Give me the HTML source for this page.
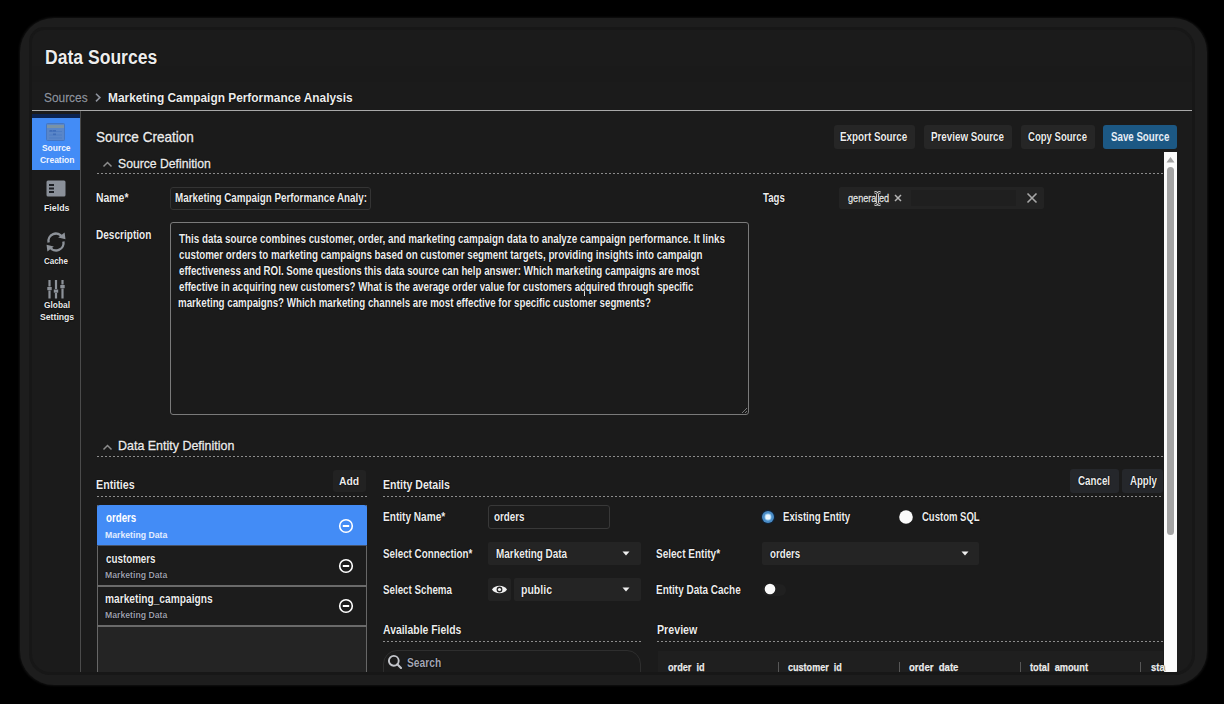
<!DOCTYPE html>
<html><head><meta charset="utf-8">
<style>
html,body{margin:0;padding:0;}
body{width:1224px;height:704px;background:#000;position:relative;overflow:hidden;font-family:"Liberation Sans",sans-serif;}
.abs{position:absolute;}
.frame{position:absolute;left:20px;top:17.5px;width:1186.5px;height:667px;border-radius:34px;background:#1d1d1d;box-shadow:0 0 2px 0.5px #101010;}
.inner{position:absolute;left:32px;top:30px;width:1160px;height:642px;border-radius:12px 18px 17px 18px;background:#1b1b1b;box-shadow:0 0 0 3px #171717;}
.clip{position:absolute;left:0;top:0;width:1224px;height:704px;clip-path:inset(30px 32px 32px 32px round 12px 18px 17px 18px);}
.t{position:absolute;white-space:pre;line-height:1;font-weight:700;transform-origin:0 0;text-shadow:0 0 1.2px #000,0 0 1.2px #000;}
.dash{position:absolute;height:1px;background:repeating-linear-gradient(90deg,#8c8c8c 0 2.5px,transparent 2.5px 4px);}
.btn{position:absolute;background:#262626;border-radius:3px;}
.box{position:absolute;box-sizing:border-box;}
</style></head><body>
<div class="frame"></div>
<div class="inner"></div>
<div class="clip">
<div class="abs" style="left:32px;top:66px;width:1160px;height:16px;background:#1a1a1a"></div>
<!-- header line -->
<div class="abs" style="left:32px;top:110px;width:1160px;height:1px;background:#a9a9a9"></div>
<!-- breadcrumb chevron -->
<svg class="abs" style="left:93px;top:92px" width="10" height="12" viewBox="0 0 10 12"><path d="M3 1.8 L6.9 5.6 L3 9.4" fill="none" stroke="#8d929c" stroke-width="1.6"/></svg>
<!-- sidebar -->
<div class="abs" style="left:80px;top:111px;width:1px;height:570px;background:#4b4b4b"></div>
<div class="abs" style="left:32px;top:114px;width:48px;height:4px;background:#0b2350"></div>
<div class="abs" style="left:32px;top:118px;width:48px;height:52px;background:#438cf6"></div>
<svg class="abs" style="left:46px;top:122.5px" width="19" height="18" viewBox="0 0 19 18"><rect x="0.5" y="0.5" width="18" height="17" rx="1" fill="#5a86c8" stroke="#4576c2" stroke-width="1"/><rect x="1" y="2" width="17" height="3" fill="#7a93a6"/><path d="M3 8.5H16M3 12H16M3 15H16" stroke="#4d7cc4" stroke-width="1"/><rect x="3.5" y="7" width="3" height="1.6" fill="#3f6db8"/><rect x="7" y="7" width="3" height="1.6" fill="#3f6db8"/><rect x="7" y="10.5" width="3" height="1.6" fill="#3f6db8"/></svg>
<svg class="abs" style="left:46px;top:180px" width="20" height="17" viewBox="0 0 20 17"><rect x="0.5" y="0.5" width="19" height="16" rx="1.5" fill="#8a9099"/><path d="M3 5H8M3 8.5H8M3 12H8" stroke="#1c1f24" stroke-width="2"/></svg>
<svg class="abs" style="left:45px;top:231px" width="22" height="22" viewBox="0 0 22 22"><path d="M3.6 11.5 A7.4 7.4 0 0 1 17.2 6.2" fill="none" stroke="#8d9299" stroke-width="2.4"/><path d="M18.4 10.5 A7.4 7.4 0 0 1 4.8 15.8" fill="none" stroke="#8d9299" stroke-width="2.4"/><path d="M13.2 6.6 L20.5 8.2 L19.6 1.6Z" fill="#8d9299"/><path d="M8.8 15.4 L1.5 13.8 L2.4 20.4Z" fill="#8d9299"/></svg>
<svg class="abs" style="left:46px;top:280px" width="20" height="19" viewBox="0 0 20 19"><path d="M3.5 0V6.5M3.5 10.5V18.5M10 0V9M10 13V18.5M16.5 0V4.5M16.5 8.5V18.5" stroke="#8d9299" stroke-width="2.2"/><rect x="1.3" y="7" width="4.4" height="3.2" fill="#8d9299"/><rect x="7.8" y="9.5" width="4.4" height="3.2" fill="#8d9299"/><rect x="14.3" y="5" width="4.4" height="3.2" fill="#8d9299"/></svg>
<!-- top buttons -->
<div class="btn" style="left:834px;top:124.5px;width:81px;height:24px;"></div>
<div class="btn" style="left:923.5px;top:124.5px;width:88px;height:24px;"></div>
<div class="btn" style="left:1020.5px;top:124.5px;width:74.5px;height:24px;"></div>
<div class="btn" style="left:1103px;top:124.5px;width:74px;height:24px;background:#1c5884"></div>
<!-- scrollbar -->
<div class="abs" style="left:1164px;top:152px;width:13px;height:530px;background:#fbfbfb"></div>
<svg class="abs" style="left:1164px;top:155px" width="13" height="9" viewBox="0 0 13 9"><path d="M2.5 7.5 L6.5 2 L10.5 7.5Z" fill="#a3a3a3"/></svg>
<div class="abs" style="left:1167px;top:167px;width:7px;height:368px;border-radius:3.5px;background:#a3a3a3"></div>
<!-- section headers -->
<svg class="abs" style="left:102px;top:160px" width="11" height="8" viewBox="0 0 11 8"><path d="M1.5 6.5 L5.5 2.5 L9.5 6.5" fill="none" stroke="#8d8d8d" stroke-width="1.5"/></svg>
<div class="dash" style="left:97px;top:172.5px;width:1066px"></div>
<!-- name input -->
<div class="box" style="left:169.5px;top:186.5px;width:201.5px;height:23px;border:1px solid #343434;border-radius:3px;background:#1c1c1c"></div>
<!-- tags -->
<div class="box" style="left:838.5px;top:187px;width:205px;height:22px;border-radius:2px;background:#232323"></div>
<div class="box" style="left:910.5px;top:190px;width:105.5px;height:16px;background:#1f1f1f"></div>
<svg class="abs" style="left:893px;top:193px" width="10" height="10" viewBox="0 0 10 10"><path d="M2 2L8 8M8 2L2 8" stroke="#b4b4b4" stroke-width="1.5"/></svg>
<svg class="abs" style="left:1026px;top:192px" width="12" height="12" viewBox="0 0 12 12"><path d="M1.5 1.5L10.5 10.5M10.5 1.5L1.5 10.5" stroke="#a8a8a8" stroke-width="1.6"/></svg>

<!-- description textarea -->
<div class="box" style="left:169.5px;top:222px;width:579.5px;height:193px;border:1px solid #7a7a7a;border-radius:3px;"></div>
<svg class="abs" style="left:740px;top:406px" width="8" height="8" viewBox="0 0 8 8"><path d="M7 2L2 7M7 5L5 7" stroke="#777" stroke-width="1"/></svg>
<div class="abs" style="left:584px;top:282px;width:1px;height:14px;background:#dcdcdc"></div>
<!-- data entity definition -->
<svg class="abs" style="left:102px;top:443px" width="11" height="8" viewBox="0 0 11 8"><path d="M1.5 6.5 L5.5 2.5 L9.5 6.5" fill="none" stroke="#8d8d8d" stroke-width="1.5"/></svg>
<div class="dash" style="left:97px;top:456px;width:1066px"></div>
<div class="btn" style="left:333px;top:470px;width:32.5px;height:22px;background:#222"></div>
<div class="dash" style="left:97px;top:496px;width:270px"></div>
<div class="dash" style="left:383px;top:496px;width:780px"></div>
<div class="btn" style="left:1069.5px;top:469px;width:49px;height:23.5px;background:#25272b"></div>
<div class="btn" style="left:1122px;top:469px;width:41px;height:23.5px;background:#25272b"></div>
<!-- entity list -->
<div class="box" style="left:97px;top:504.5px;width:270px;height:200px;border:1.5px solid #676767;border-top:none;background:#242424"></div>
<div class="box" style="left:97px;top:545px;width:270px;height:81px;background:#1c1c1c;border-left:1.5px solid #676767;border-right:1.5px solid #676767"></div>
<div class="abs" style="left:97px;top:585.3px;width:270px;height:1.5px;background:#6a6a6a"></div>
<div class="abs" style="left:97px;top:625.3px;width:270px;height:1.5px;background:#6a6a6a"></div>
<div class="abs" style="left:97px;top:545px;width:270px;height:1px;background:#46536b"></div>
<div class="box" style="left:97px;top:504.5px;width:270px;height:40.5px;background:#438cf6;border-radius:3px 3px 0 0;"></div>
<svg class="abs" style="left:337px;top:516.5px" width="18" height="18" viewBox="0 0 18 18"><circle cx="9" cy="9" r="6.3" fill="none" stroke="#fff" stroke-width="1.6"/><path d="M5.8 9H12.2" stroke="#fff" stroke-width="2"/></svg>
<svg class="abs" style="left:337px;top:556.5px" width="18" height="18" viewBox="0 0 18 18"><circle cx="9" cy="9" r="6.3" fill="none" stroke="#fff" stroke-width="1.6"/><path d="M5.8 9H12.2" stroke="#fff" stroke-width="2"/></svg>
<svg class="abs" style="left:337px;top:596.5px" width="18" height="18" viewBox="0 0 18 18"><circle cx="9" cy="9" r="6.3" fill="none" stroke="#fff" stroke-width="1.6"/><path d="M5.8 9H12.2" stroke="#fff" stroke-width="2"/></svg>
<!-- form -->
<div class="box" style="left:488px;top:505px;width:122px;height:24px;border:1px solid #383838;border-radius:3px;background:#1c1c1c"></div>
<div class="box" style="left:488px;top:542px;width:152.5px;height:23px;border-radius:2px;background:#242424"></div>
<svg class="abs" style="left:620px;top:549px" width="12" height="9" viewBox="0 0 12 9"><path d="M2.5 2.5H9.5L6 6.5Z" fill="#f0f0f0"/></svg>
<div class="box" style="left:488px;top:578px;width:23px;height:23px;border-radius:2px;background:#232323"></div>
<svg class="abs" style="left:491px;top:583px" width="17" height="13" viewBox="0 0 17 13"><path d="M1 6.5 C4 1.5 13 1.5 16 6.5 C13 11.5 4 11.5 1 6.5Z" fill="#f2f2f2"/><circle cx="8.5" cy="6.5" r="2.9" fill="#232323"/><circle cx="8.5" cy="6.5" r="1.6" fill="#f2f2f2"/></svg>
<div class="box" style="left:514px;top:578px;width:126.5px;height:23px;border-radius:2px;background:#242424"></div>
<svg class="abs" style="left:620px;top:585px" width="12" height="9" viewBox="0 0 12 9"><path d="M2.5 2.5H9.5L6 6.5Z" fill="#f0f0f0"/></svg>
<svg class="abs" style="left:759px;top:508px" width="18" height="18" viewBox="0 0 18 18"><circle cx="9" cy="9" r="7.2" fill="#10243a"/><circle cx="9" cy="9" r="6" fill="#4a8cc6"/><circle cx="9" cy="9" r="3.4" fill="#9fd0f2"/><circle cx="9" cy="9" r="2.5" fill="#eaf6ff"/></svg>
<svg class="abs" style="left:897px;top:508px" width="18" height="18" viewBox="0 0 18 18"><circle cx="9" cy="9" r="6.8" fill="#fafafa"/></svg>
<div class="box" style="left:762px;top:541.5px;width:216.5px;height:23px;border-radius:2px;background:#242424"></div>
<svg class="abs" style="left:959px;top:549px" width="12" height="9" viewBox="0 0 12 9"><path d="M2.5 2.5H9.5L6 6.5Z" fill="#f0f0f0"/></svg>
<div class="box" style="left:762px;top:583.5px;width:23.5px;height:12px;border-radius:6px;background:#202020"></div>
<svg class="abs" style="left:763px;top:582px" width="14" height="14" viewBox="0 0 14 14"><circle cx="7" cy="7" r="5.3" fill="#fafafa"/></svg>
<div class="dash" style="left:383px;top:641px;width:258px"></div>
<div class="dash" style="left:657px;top:641px;width:506px"></div>
<div class="box" style="left:382.5px;top:650px;width:258.5px;height:40px;border:1.5px solid #2e2e2e;border-radius:14px;background:#1b1b1b"></div>
<svg class="abs" style="left:387px;top:654px" width="16" height="16" viewBox="0 0 16 16"><circle cx="6.8" cy="6.8" r="4.9" fill="none" stroke="#c4c6cc" stroke-width="1.9"/><path d="M10.3 10.3L14 14" stroke="#c4c6cc" stroke-width="2.1" stroke-linecap="round"/></svg>
<div class="box" style="left:658px;top:651px;width:505px;height:40px;background:#1f1f1f"></div>
<div class="abs" style="left:778px;top:662px;width:1px;height:20px;background:#575757"></div>
<div class="abs" style="left:899px;top:662px;width:1px;height:20px;background:#575757"></div>
<div class="abs" style="left:1020px;top:662px;width:1px;height:20px;background:#575757"></div>
<div class="abs" style="left:1140px;top:662px;width:1px;height:20px;background:#575757"></div>
<div class="t" id="t0" style="left:45.20px;top:47.69px;font-size:19.5px;color:#ececec;transform:scaleX(0.9005);">Data Sources</div>
<div class="t" id="t1" style="left:43.80px;top:91.05px;font-size:13.4px;color:#8d929c;font-weight:400;-webkit-text-stroke:0.3px #8d929c;transform:scaleX(0.8881);">Sources</div>
<div class="t" id="t2" style="left:107.50px;top:91.32px;font-size:13.2px;color:#ececec;transform:scaleX(0.9013);">Marketing Campaign Performance Analysis</div>
<div class="t" id="t3" style="left:42.10px;top:143.83px;font-size:9.3px;color:#f2f6ff;transform:scaleX(0.9046);text-shadow:none;">Source</div>
<div class="t" id="t4" style="left:39.60px;top:155.83px;font-size:9.3px;color:#f2f6ff;transform:scaleX(0.9121);text-shadow:none;">Creation</div>
<div class="t" id="t5" style="left:44.40px;top:203.83px;font-size:9.3px;color:#ececec;transform:scaleX(0.9453);">Fields</div>
<div class="t" id="t6" style="left:44.30px;top:256.93px;font-size:9.3px;color:#ececec;transform:scaleX(0.8575);">Cache</div>
<div class="t" id="t7" style="left:43.80px;top:301.23px;font-size:9.3px;color:#ececec;transform:scaleX(0.8984);">Global</div>
<div class="t" id="t8" style="left:39.60px;top:313.13px;font-size:9.3px;color:#ececec;transform:scaleX(0.9324);">Settings</div>
<div class="t" id="t9" style="left:96.00px;top:130.06px;font-size:14.1px;color:#ececec;font-weight:400;-webkit-text-stroke:0.3px #ececec;transform:scaleX(0.9608);">Source Creation</div>
<div class="t" id="t10" style="left:117.50px;top:156.52px;font-size:13.2px;color:#ececec;font-weight:400;-webkit-text-stroke:0.3px #ececec;transform:scaleX(0.9238);">Source Definition</div>
<div class="t" id="t11" style="left:840.00px;top:131.33px;font-size:12.6px;color:#ececec;transform:scaleX(0.7820);">Export Source</div>
<div class="t" id="t12" style="left:930.50px;top:131.33px;font-size:12.6px;color:#ececec;transform:scaleX(0.7781);">Preview Source</div>
<div class="t" id="t13" style="left:1028.00px;top:131.33px;font-size:12.6px;color:#ececec;transform:scaleX(0.7591);">Copy Source</div>
<div class="t" id="t14" style="left:1111.40px;top:131.33px;font-size:12.6px;color:#e6edf5;transform:scaleX(0.7713);text-shadow:none;">Save Source</div>
<div class="t" id="t15" style="left:96.00px;top:192.33px;font-size:12.6px;color:#ececec;transform:scaleX(0.8286);">Name*</div>
<div class="t" id="t16" style="left:174.90px;top:192.33px;font-size:12.6px;color:#ececec;transform:scaleX(0.7810);">Marketing Campaign Performance Analy:</div>
<div class="t" id="t17" style="left:762.70px;top:192.33px;font-size:12.6px;color:#ececec;transform:scaleX(0.7658);">Tags</div>
<div class="t" id="t18" style="left:847.70px;top:192.79px;font-size:11px;color:#e2e2e2;font-weight:400;-webkit-text-stroke:0.3px #e2e2e2;transform:scaleX(0.8286);">generated</div>
<div class="t" id="t19" style="left:96.00px;top:228.63px;font-size:12.6px;color:#ececec;transform:scaleX(0.7982);">Description</div>
<div class="t" id="t20" style="left:178.50px;top:233.32px;font-size:12.5px;color:#ececec;transform:scaleX(0.7875);">This data source combines customer, order, and marketing campaign data to analyze campaign performance. It links</div>
<div class="t" id="t21" style="left:178.50px;top:249.32px;font-size:12.5px;color:#ececec;transform:scaleX(0.7843);">customer orders to marketing campaigns based on customer segment targets, providing insights into campaign</div>
<div class="t" id="t22" style="left:178.50px;top:265.32px;font-size:12.5px;color:#ececec;transform:scaleX(0.7803);">effectiveness and ROI. Some questions this data source can help answer: Which marketing campaigns are most</div>
<div class="t" id="t23" style="left:178.50px;top:281.32px;font-size:12.5px;color:#ececec;transform:scaleX(0.7770);">effective in acquiring new customers? What is the average order value for customers acquired through specific</div>
<div class="t" id="t24" style="left:177.50px;top:297.32px;font-size:12.5px;color:#ececec;transform:scaleX(0.7790);">marketing campaigns? Which marketing channels are most effective for specific customer segments?</div>
<div class="t" id="t25" style="left:117.80px;top:439.42px;font-size:13.2px;color:#ececec;font-weight:400;-webkit-text-stroke:0.3px #ececec;transform:scaleX(0.9448);">Data Entity Definition</div>
<div class="t" id="t26" style="left:96.00px;top:478.93px;font-size:12.6px;color:#ececec;transform:scaleX(0.8503);">Entities</div>
<div class="t" id="t27" style="left:338.80px;top:475.61px;font-size:11.8px;color:#ececec;transform:scaleX(0.8781);">Add</div>
<div class="t" id="t28" style="left:383.10px;top:478.83px;font-size:12.6px;color:#ececec;transform:scaleX(0.8385);">Entity Details</div>
<div class="t" id="t29" style="left:1078.00px;top:475.27px;font-size:12.2px;color:#ececec;transform:scaleX(0.8030);">Cancel</div>
<div class="t" id="t30" style="left:1130.40px;top:475.27px;font-size:12.2px;color:#ececec;transform:scaleX(0.7906);">Apply</div>
<div class="t" id="t31" style="left:106.40px;top:512.44px;font-size:12px;color:#ffffff;transform:scaleX(0.8103);text-shadow:none;">orders</div>
<div class="t" id="t32" style="left:105.40px;top:529.94px;font-size:9.4px;color:#e4eeff;transform:scaleX(0.9265);text-shadow:none;">Marketing Data</div>
<div class="t" id="t33" style="left:106.40px;top:552.64px;font-size:12px;color:#ececec;transform:scaleX(0.8165);">customers</div>
<div class="t" id="t34" style="left:105.40px;top:570.24px;font-size:9.4px;color:#9c9eaa;transform:scaleX(0.9262);">Marketing Data</div>
<div class="t" id="t35" style="left:105.40px;top:592.74px;font-size:12px;color:#ececec;transform:scaleX(0.8489);">marketing_campaigns</div>
<div class="t" id="t36" style="left:105.40px;top:610.24px;font-size:9.4px;color:#9c9eaa;transform:scaleX(0.9262);">Marketing Data</div>
<div class="t" id="t37" style="left:383.10px;top:511.33px;font-size:12.6px;color:#ececec;transform:scaleX(0.8013);">Entity Name*</div>
<div class="t" id="t38" style="left:493.50px;top:511.33px;font-size:12.6px;color:#ececec;transform:scaleX(0.7791);">orders</div>
<div class="t" id="t39" style="left:782.90px;top:510.93px;font-size:12.6px;color:#ececec;transform:scaleX(0.7675);">Existing Entity</div>
<div class="t" id="t40" style="left:922.10px;top:510.93px;font-size:12.6px;color:#ececec;transform:scaleX(0.7559);">Custom SQL</div>
<div class="t" id="t41" style="left:383.10px;top:547.53px;font-size:12.6px;color:#ececec;transform:scaleX(0.7781);">Select Connection*</div>
<div class="t" id="t42" style="left:495.90px;top:547.53px;font-size:12.6px;color:#ececec;transform:scaleX(0.7879);">Marketing Data</div>
<div class="t" id="t43" style="left:656.00px;top:547.83px;font-size:12.6px;color:#ececec;transform:scaleX(0.7959);">Select Entity*</div>
<div class="t" id="t44" style="left:770.00px;top:547.83px;font-size:12.6px;color:#ececec;transform:scaleX(0.7713);">orders</div>
<div class="t" id="t45" style="left:383.10px;top:584.13px;font-size:12.6px;color:#ececec;transform:scaleX(0.7757);">Select Schema</div>
<div class="t" id="t46" style="left:521.20px;top:584.13px;font-size:12.6px;color:#ececec;transform:scaleX(0.8358);">public</div>
<div class="t" id="t47" style="left:656.00px;top:583.73px;font-size:12.6px;color:#ececec;transform:scaleX(0.7913);">Entity Data Cache</div>
<div class="t" id="t48" style="left:383.30px;top:624.33px;font-size:12.6px;color:#ececec;transform:scaleX(0.8266);">Available Fields</div>
<div class="t" id="t49" style="left:656.90px;top:623.93px;font-size:12.6px;color:#ececec;transform:scaleX(0.8468);">Preview</div>
<div class="t" id="t50" style="left:407.00px;top:656.73px;font-size:12.6px;color:#a3a6b4;transform:scaleX(0.8146);">Search</div>
<div class="t" id="t51" style="left:667.80px;top:661.69px;font-size:11px;color:#ececec;transform:scaleX(0.8302);-webkit-text-stroke:0.25px #ececec;">order_id</div>
<div class="t" id="t52" style="left:788.00px;top:661.69px;font-size:11px;color:#ececec;transform:scaleX(0.8232);-webkit-text-stroke:0.25px #ececec;">customer_id</div>
<div class="t" id="t53" style="left:909.30px;top:661.69px;font-size:11px;color:#ececec;transform:scaleX(0.8687);-webkit-text-stroke:0.25px #ececec;">order_date</div>
<div class="t" id="t54" style="left:1030.10px;top:661.69px;font-size:11px;color:#ececec;transform:scaleX(0.8394);-webkit-text-stroke:0.25px #ececec;">total_amount</div>
<div class="t" id="t55" style="left:1151.10px;top:661.69px;font-size:11px;color:#ececec;transform:scaleX(0.8600);-webkit-text-stroke:0.25px #ececec;">sta</div>
<svg class="abs" style="left:872.5px;top:191px" width="9" height="15" viewBox="0 0 9 15"><path d="M1.5 1.2Q4.5 1.2 4.5 3.5V11.5Q4.5 13.8 1.5 13.8M7.5 1.2Q4.5 1.2 4.5 3.5M4.5 11.5Q4.5 13.8 7.5 13.8" stroke="#e8e8e8" stroke-width="2.4" fill="none"/><path d="M1.5 1.2Q4.5 1.2 4.5 3.5V11.5Q4.5 13.8 1.5 13.8M7.5 1.2Q4.5 1.2 4.5 3.5M4.5 11.5Q4.5 13.8 7.5 13.8" stroke="#111" stroke-width="0.9" fill="none"/></svg>
</div>
</body></html>
